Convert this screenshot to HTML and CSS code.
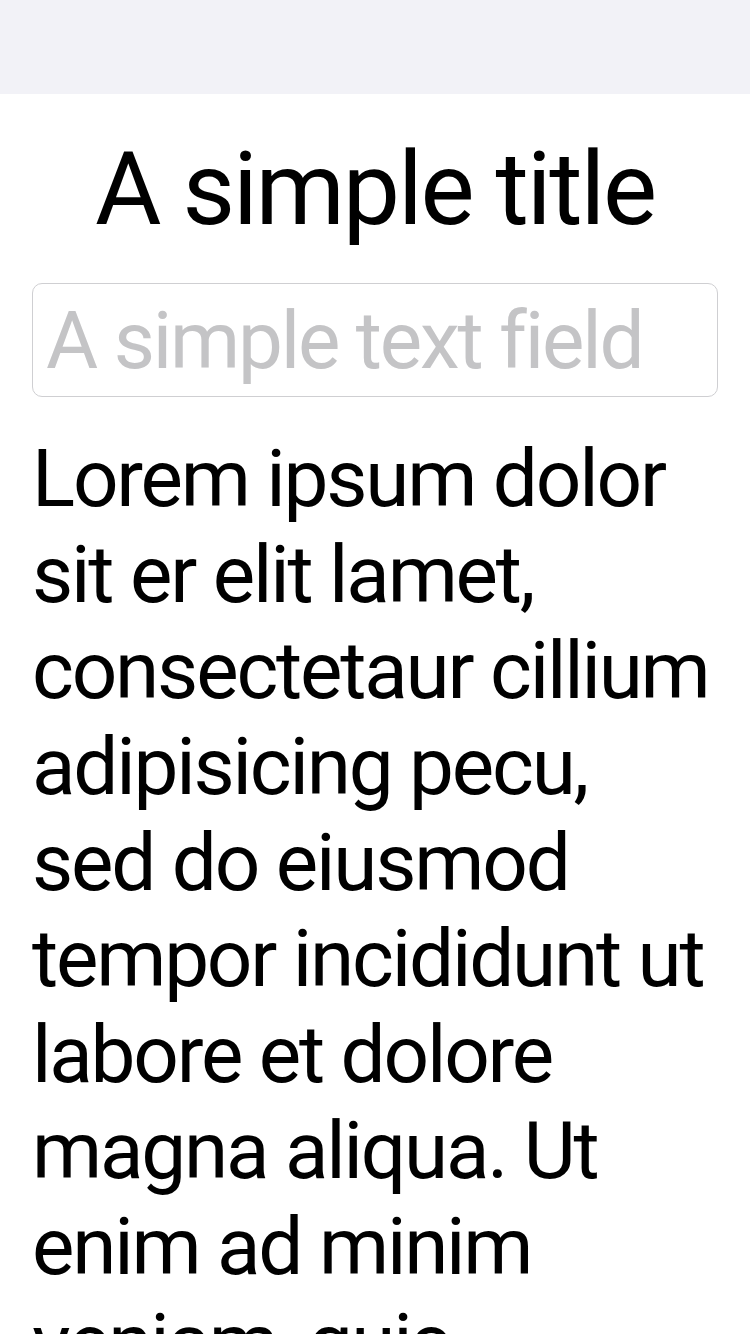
FILE: index.html
```html
<!DOCTYPE html>
<html lang="en">
<head>
<meta charset="utf-8">
<title>A simple title</title>
<link rel="stylesheet" href="styles.css">
</head>
<body>
<header class="nav-bar"></header>
<main class="content">
  <h1 class="title">A simple title</h1>
  <input class="field" type="text" placeholder="A simple text field">
  <p class="body-text">Lorem ipsum dolor<br>sit er elit lamet,<br>consectetaur cillium<br>adipisicing pecu,<br>sed do eiusmod<br>tempor incididunt ut<br>labore et dolore<br>magna aliqua. Ut<br>enim ad minim<br>veniam, quis</p>
</main>
</body>
</html>
```

FILE: styles.css
```css
* { box-sizing: border-box; }
html, body {
  margin: 0;
  padding: 0;
  background: #ffffff;
  font-family: Roboto, Inter, "Noto Sans", "Liberation Sans", sans-serif;
  color: #000000;
  overflow: hidden;
  height: 1334px;
}
.nav-bar {
  height: 94px;
  background: #f2f2f7;
}
.content {
  display: flex;
  flex-direction: column;
  padding: 35px 32px 0 32px;
}
.title {
  margin: 0;
  font-size: 102px;
  line-height: 120px;
  font-weight: 400;
  text-align: center;
  letter-spacing: -2.2px;
}
.field {
  margin: 34px 0 0 0;
  width: 100%;
  height: 114px;
  border: 1px solid #cfcfd2;
  border-radius: 10px;
  padding: 10px 13px 8px 13px;
  font-family: inherit;
  font-size: 80px;
  line-height: 94px;
  letter-spacing: -2.2px;
  color: #000;
  background: #fff;
  outline: none;
}
.field::placeholder {
  color: #c4c4c6;
  opacity: 1;
}
.body-text {
  margin: 34px 0 0 0;
  font-size: 80px;
  line-height: 96px;
  letter-spacing: -2.2px;
  white-space: nowrap;
}
```
